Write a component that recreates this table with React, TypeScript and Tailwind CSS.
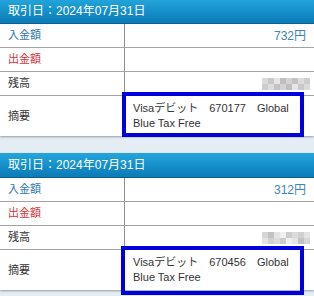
import React from "react";

type Entry = {
  date: string;
  deposit: string;
  memoCode: string;
  boxClass: string;
  maskCells: string[];
};

const entries: Entry[] = [
  {
    date: "2024年07月31日",
    deposit: "732円",
    memoCode: "670177",
    boxClass: "left-[122px] top-[93px] w-[182px] h-[45px]",
    maskCells: ["#d6d6d6", "#c4c4c4", "#e4e4e4", "#b9b9b9", "#cfcfcf", "#bdbdbd", "#d9d9d9", "#c8c8c8"],
  },
  {
    date: "2024年07月31日",
    deposit: "312円",
    memoCode: "670456",
    boxClass: "left-[121px] top-[93px] w-[183px] h-[49px]",
    maskCells: ["#d2d2d2", "#bcbcbc", "#e2e2e2", "#eeeeee", "#c6c6c6", "#d8d8d8", "#cccccc", "#e0e0e0"],
  },
];

function Mask({ cells }: { cells: string[] }) {
  // pixelated placeholder for the hidden balance
  return (
    <div className="grid grid-cols-8 w-[48px] h-[12px] blur-[0.6px] opacity-90 -mr-[4px]">
      {cells.map((c, i) => (
        <div key={i} style={{ backgroundColor: c }} />
      ))}
      {cells
        .slice()
        .reverse()
        .map((c, i) => (
          <div key={"b" + i} style={{ backgroundColor: c }} />
        ))}
    </div>
  );
}

function Row({
  label,
  labelClass,
  children,
}: {
  label: string;
  labelClass: string;
  children?: React.ReactNode;
}) {
  return (
    <div className="grid grid-cols-[125px_1fr] h-[24px] border-b border-[#a3a3a3]">
      <div className={`flex items-center pl-[8px] text-[11px] ${labelClass} border-r border-[#8f8f8f]`}>
        {label}
      </div>
      <div className="flex items-center justify-end pr-[8px] text-[12px]">{children}</div>
    </div>
  );
}

function Card({ e, first }: { e: Entry; first?: boolean }) {
  return (
    <div
      className={`relative bg-white shadow-[0_1px_2px_rgba(0,0,0,0.35)] ${first ? "-mt-px" : ""}`}
    >
      <div className="h-[25px] flex items-center pl-[8px] text-white text-[12px] bg-gradient-to-b from-[#22a6dc] to-[#0a7bb6] border-b border-[#0b5f8c]">
        取引日：{e.date}
      </div>
      <Row label="入金額" labelClass="text-[#2f78b0]">
        <span className="text-[#3b84b8]">{e.deposit}</span>
      </Row>
      <Row label="出金額" labelClass="text-[#d8323c]" />
      <Row label="残高" labelClass="text-[#333333]">
        <Mask cells={e.maskCells} />
      </Row>
      <div className="grid grid-cols-[125px_1fr] h-[40px]">
        <div className="flex items-center pl-[8px] text-[11px] text-[#333333] border-r border-[#8f8f8f]">
          摘要
        </div>
        <div className="flex items-center pl-[8px] pr-[8px] text-[11px] leading-[15px] text-[#333333]">
          <span>
            Visaデビット　{e.memoCode}　Global
            <br />
            Blue Tax Free
          </span>
        </div>
      </div>
      <div
        className={`absolute border-[4px] border-[#0000dc] pointer-events-none ${e.boxClass}`}
      />
    </div>
  );
}

export default function App() {
  return (
    <div
      className="w-[314px] h-[296px] overflow-hidden bg-[#e4ecf4] flex flex-col gap-[17px]"
      style={{ fontFamily: '"Liberation Sans", "Noto Sans CJK JP", sans-serif' }}
    >
      <Card e={entries[0]} first />
      <Card e={entries[1]} />
    </div>
  );
}
